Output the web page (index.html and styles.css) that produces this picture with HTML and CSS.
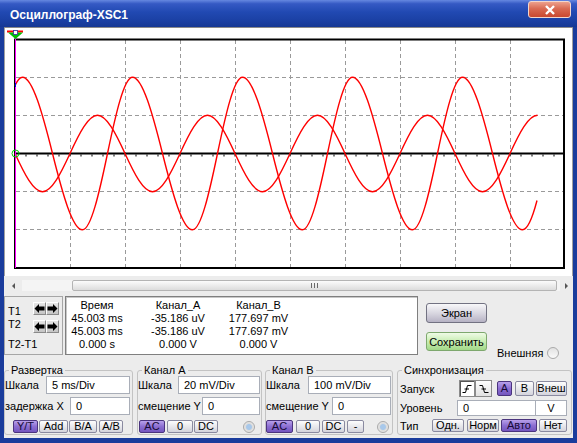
FILE: index.html
```html
<!DOCTYPE html>
<html>
  <head>
    <meta charset="utf-8">
    <title>Осциллограф-XSC1</title>
    <link rel="stylesheet" href="styles.css">
  </head>
  <body>
    <div class="window">
      <div class="titlebar">
        <span class="title">Осциллограф-XSC1</span>
        <button class="close-button">
          <svg width="12" height="10" viewBox="0 0 12 10"><path d="M2 1L10 9M10 1L2 9" stroke="#fff" stroke-width="2.4"/></svg>
        </button>
      </div>

      <div class="client">
        <div class="screen">
          <svg width="567" height="248" viewBox="5 28 567 248">
            <path class="grid" d="M70.5 40V267M125.5 40V267M180.5 40V267M235.5 40V267M290.5 40V267M345.5 40V267M400.5 40V267M455.5 40V267M510.5 40V267M16 77.5H563M16 115.5H563M16 191.5H563M16 229.5H563"/>
            <rect class="frame" x="15" y="39.5" width="549" height="228.5"/>
            <line class="axis" x1="15" y1="153.5" x2="564" y2="153.5"/>
            <line class="ticks" x1="25.5" y1="155.5" x2="564" y2="155.5"/>

            <path class="trace" d="M15 85.5Q18.8 77.2 22.5 77.2
              c10 0 20 36.3 30 76.3c10 40 20 76.3 30 76.3c8.33 0 16.67 -36.3 25 -76.3c8.33 -40 16.67 -76.3 25 -76.3
              c10 0 20 36.3 30 76.3c10 40 20 76.3 30 76.3c8.33 0 16.67 -36.3 25 -76.3c8.33 -40 16.67 -76.3 25 -76.3
              c10 0 20 36.3 30 76.3c10 40 20 76.3 30 76.3c8.33 0 16.67 -36.3 25 -76.3c8.33 -40 16.67 -76.3 25 -76.3
              c10 0 20 36.3 30 76.3c10 40 20 76.3 30 76.3c8.33 0 16.67 -36.3 25 -76.3c8.33 -40 16.67 -76.3 25 -76.3
              c10 0 20 36.3 30 76.3c10 40 20 76.3 30 76.3q6.8 0 14.5 -29.3"/>
            <path class="trace" d="M15 153.5c9.17 20 18.33 38.2 27.5 38.2
              s18.33 -18.2 27.5 -38.2s18.33 -38.2 27.5 -38.2s18.33 18.2 27.5 38.2
              s18.33 38.2 27.5 38.2s18.33 -18.2 27.5 -38.2s18.33 -38.2 27.5 -38.2s18.33 18.2 27.5 38.2
              s18.33 38.2 27.5 38.2s18.33 -18.2 27.5 -38.2s18.33 -38.2 27.5 -38.2s18.33 18.2 27.5 38.2
              s18.33 38.2 27.5 38.2s18.33 -18.2 27.5 -38.2s18.33 -38.2 27.5 -38.2s18.33 18.2 27.5 38.2
              s18.33 38.2 27.5 38.2s18.33 -18.2 27.5 -38.2s18.33 -38.2 27.5 -38.2"/>

            <line class="cursor" x1="15.5" y1="31" x2="15.5" y2="268"/>
            <rect x="15" y="83" width="1" height="4" fill="#0000ff"/>
            <circle class="zero-mark" cx="15.5" cy="153.5" r="3.5"/>
            <rect x="7" y="30.5" width="16" height="2" fill="#ff0000"/>
            <polygon points="8,32.5 23,32.5 15.5,39" fill="#00c000"/>
            <rect x="13.5" y="30.5" width="4" height="4" fill="#fff" stroke="#3030a0" stroke-width="0.8"/>
          </svg>
        </div>

        <div class="hscroll">
          <div class="scroll-arrow"><span class="arrow-left"></span></div>
          <div class="track">
            <div class="thumb"><span class="grip"></span></div>
          </div>
          <div class="scroll-arrow right"><span class="arrow-right"></span></div>
        </div>

        <div class="readout">
          <div class="tbox">
            <div class="tbox-top">
              <div class="tbox-labels">
                <div>T1</div>
                <div>T2</div>
              </div>
              <div class="tbox-buttons">
                <div class="arrow-pair">
                  <button class="step"><svg width="11" height="11" viewBox="0 0 11 11"><path d="M0.5 5.5L5 1V3.5H10.5V7.5H5V10Z"/></svg></button>
                  <button class="step"><svg width="11" height="11" viewBox="0 0 11 11"><path d="M10.5 5.5L6 1V3.5H0.5V7.5H6V10Z"/></svg></button>
                </div>
                <div class="arrow-pair">
                  <button class="step"><svg width="11" height="11" viewBox="0 0 11 11"><path d="M0.5 5.5L5 1V3.5H10.5V7.5H5V10Z"/></svg></button>
                  <button class="step"><svg width="11" height="11" viewBox="0 0 11 11"><path d="M10.5 5.5L6 1V3.5H0.5V7.5H6V10Z"/></svg></button>
                </div>
              </div>
            </div>
            <div class="tdiff">T2-T1</div>
          </div>

          <div class="data">
            <div class="cell">Время</div><div class="cell">Канал_А</div><div class="cell">Канал_В</div>
            <div class="cell">45.003 ms</div><div class="cell">-35.186 uV</div><div class="cell">177.697 mV</div>
            <div class="cell">45.003 ms</div><div class="cell">-35.186 uV</div><div class="cell">177.697 mV</div>
            <div class="cell">0.000 s</div><div class="cell">0.000 V</div><div class="cell">0.000 V</div>
          </div>

          <div class="side">
            <button class="wide-btn">Экран</button>
            <button class="wide-btn save">Сохранить</button>
          </div>

          <div class="ext">
            <span>Внешняя</span>
            <span class="radio"></span>
          </div>
        </div>

        <div class="controls">
          <fieldset class="group g-sweep">
            <legend>Развертка</legend>
            <div class="row"><span>Шкала</span><span class="field w84">5 ms/Div</span></div>
            <div class="row"><span>задержка X</span><span class="field w60">0</span></div>
            <div class="buttons sweep-buttons">
              <button class="btn on w25">Y/T</button>
              <button class="btn w29 ml1">Add</button>
              <button class="btn w28 ml1">B/A</button>
              <button class="btn w24 ml2">A/B</button>
            </div>
          </fieldset>

          <fieldset class="group g-a">
            <legend>Канал А</legend>
            <div class="row"><span>Шкала</span><span class="field w82">20 mV/Div</span></div>
            <div class="row"><span>смещение Y</span><span class="field w58">0</span></div>
            <div class="buttons a-buttons">
              <button class="btn on w26">AC</button>
              <button class="btn w26 ml2">0</button>
              <button class="btn w24 ml1">DC</button>
              <span class="radio dot ml25"></span>
            </div>
          </fieldset>

          <fieldset class="group g-b">
            <legend>Канал В</legend>
            <div class="row"><span>Шкала</span><span class="field w83">100 mV/Div</span></div>
            <div class="row"><span>смещение Y</span><span class="field w59">0</span></div>
            <div class="buttons">
              <button class="btn on w27">AC</button>
              <button class="btn w24 ml3">0</button>
              <button class="btn w23 ml2">DC</button>
              <button class="btn w17 ml2">-</button>
              <span class="radio dot ml13"></span>
            </div>
          </fieldset>

          <fieldset class="group g-sync">
            <legend>Синхронизация</legend>
            <div class="sync-row trigger">
              <span class="lbl-trigger">Запуск</span>
              <button class="edge pressed"><svg width="10" height="10" viewBox="0 0 10 10"><path d="M0.5 8.5H3.5L5.5 1.5H9.5M2.5 5H7" stroke="#000" fill="none"/></svg></button>
              <button class="edge w17"><svg width="10" height="10" viewBox="0 0 10 10"><path d="M0.5 1.5H3.5L5.5 8.5H9.5M2.5 5H7" stroke="#000" fill="none"/></svg></button>
              <button class="btn tall on w15 ml5">A</button>
              <button class="btn tall w19 ml3">B</button>
              <button class="btn tall w31 ml2">Внеш</button>
            </div>
            <div class="sync-row level">
              <span class="lbl-level">Уровень</span>
              <span class="field w79">0</span>
              <span class="field unit">V</span>
            </div>
            <div class="sync-row type">
              <span class="lbl-type">Тип</span>
              <button class="btn w32">Одн.</button>
              <button class="btn w32 ml3">Норм</button>
              <button class="btn on w36 ml2">Авто</button>
              <button class="btn w28 ml2">Нет</button>
            </div>
          </fieldset>
        </div>
      </div>
    </div>
  </body>
</html>
```

FILE: styles.css
```css
body {
  margin: 0;
  font-family: "Liberation Sans", Arial, sans-serif;
  font-size: 11px;
  color: #000;
}
button {
  font: inherit;
  color: inherit;
  padding: 0;
  box-sizing: border-box;
}

.window {
  width: 577px;
  height: 443px;
  display: flex;
  flex-direction: column;
  background: #1a3c9c;
}

/* title bar */
.titlebar {
  height: 27px;
  flex-shrink: 0;
  display: flex;
  justify-content: space-between;
  padding: 0 6px 0 10px;
  background: linear-gradient(#6688e0, #3559c4 14%, #2149b2 45%, #1a3fa2 80%, #163894);
}
.title {
  color: #fff;
  font-weight: bold;
  font-size: 12px;
  margin-top: 8px;
}
.close-button {
  width: 43px;
  height: 17px;
  margin-top: 1px;
  border: 1px solid #f2d6cc;
  border-radius: 3px;
  background: linear-gradient(#eca08c, #d96a52 45%, #c9482f);
  display: flex;
  align-items: center;
  justify-content: center;
}

/* window body */
.client {
  flex: 1;
  margin: 0 4px 5px;
  background: #ececec;
  border-top: 1px solid #8a8a8a;
  display: flex;
  flex-direction: column;
}
.screen {
  height: 248px;
  background: #fff;
  border-left: 1px solid #a0a0a0;
  border-right: 1px solid #a0a0a0;
}
.screen svg {
  display: block;
}
.grid {
  stroke: #9a9a9a;
  stroke-dasharray: 4 3;
  fill: none;
}
.frame {
  fill: none;
  stroke: #000;
  stroke-width: 2;
}
.axis {
  stroke: #000;
  stroke-width: 2;
}
.ticks {
  stroke: #000;
  stroke-width: 2;
  stroke-dasharray: 1 10;
}
.trace {
  fill: none;
  stroke: #ff0000;
  stroke-width: 1.4;
}
.cursor {
  stroke: #ff00ff;
  stroke-width: 1;
}
.zero-mark {
  fill: none;
  stroke: #00d000;
  stroke-width: 1;
}

/* scroll bar */
.hscroll {
  display: flex;
  height: 11px;
  margin-top: 4px;
}
.scroll-arrow {
  width: 18px;
  display: flex;
  align-items: center;
  justify-content: center;
}
.scroll-arrow.right {
  width: 13px;
}
.arrow-left {
  border-right: 3px solid #555;
  border-top: 3px solid transparent;
  border-bottom: 3px solid transparent;
}
.arrow-right {
  border-left: 3px solid #555;
  border-top: 3px solid transparent;
  border-bottom: 3px solid transparent;
}
.track {
  flex: 1;
  display: flex;
  background: #f4f4f4;
}
.thumb {
  flex: 1;
  margin: 0 3px 0 50px;
  border: 1px solid #b4b4b4;
  border-radius: 2px;
  background: linear-gradient(#fcfcfc, #dcdcdc);
  display: flex;
  align-items: center;
  justify-content: center;
}
.grip {
  width: 7px;
  height: 5px;
  background: repeating-linear-gradient(90deg, #6a6a6a 0 1px, transparent 1px 3px);
}

/* readout */
.readout {
  display: flex;
  align-items: flex-start;
  margin-top: 5px;
  height: 59px;
}
.tbox {
  width: 59px;
  height: 59px;
  box-sizing: border-box;
  border: 1px solid #a6a6a6;
  padding-left: 3px;
}
.tbox-top {
  display: flex;
}
.tbox-labels {
  width: 25px;
  padding-top: 8px;
  line-height: 13px;
}
.tbox-buttons {
  padding-top: 5px;
}
.arrow-pair {
  display: flex;
}
.arrow-pair + .arrow-pair {
  margin-top: 5px;
}
.step {
  width: 13px;
  height: 13px;
  border: 1px solid #8a8a8a;
  border-left-color: #fff;
  border-top-color: #fff;
  background: linear-gradient(#e6e6e6, #c4c4c4);
  display: flex;
  align-items: center;
  justify-content: center;
}
.tdiff {
  margin-top: 5px;
  line-height: 13px;
}
.data {
  width: 353px;
  height: 59px;
  margin-left: 2px;
  box-sizing: border-box;
  background: #fff;
  border: 1px solid #7f7f7f;
  box-shadow: inset 1px 1px 0 #c8c8c8;
  padding-top: 2px;
  display: grid;
  grid-template-columns: 62px 100px 61px;
  grid-auto-rows: 13px;
}
.cell {
  display: flex;
  justify-content: center;
  white-space: nowrap;
  line-height: 13px;
}
.side {
  margin-left: 8px;
  padding-top: 7px;
  display: flex;
  flex-direction: column;
  gap: 9px;
}
.wide-btn {
  width: 61px;
  height: 20px;
  border: 1px solid #727282;
  border-radius: 3px;
  background: linear-gradient(#f8f8fa, #d6d4de 55%, #b6b2c4);
}
.wide-btn.save {
  height: 19px;
  border-color: #7ea86e;
  background: linear-gradient(#effbe6, #c8edb2 50%, #a2d888);
}
.ext {
  margin: 50px 0 0 10px;
  height: 13px;
  display: flex;
  align-items: center;
  gap: 4px;
}
.radio {
  width: 12px;
  height: 12px;
  box-sizing: border-box;
  border-radius: 50%;
  border: 1px solid #a9a9a9;
  background: linear-gradient(#e2e2e2, #fafafa);
}
.radio.dot {
  background: radial-gradient(circle, #a8c8ea 0 2.5px, #dcdcdc 3.5px, #f6f6f6);
}

/* bottom groups */
.controls {
  display: flex;
  margin-top: 9px;
}
.group {
  margin: 0;
  padding: 0 0 1px;
  border: 1px solid #c3c3c3;
  border-radius: 3px;
  box-sizing: border-box;
  min-width: 0;
}
.group legend {
  margin-left: 4px;
  padding: 0 2px;
  line-height: 12px;
}
.g-sweep {
  width: 129px;
}
.g-a {
  width: 125px;
  margin-left: 4px;
}
.g-b {
  width: 128px;
  margin-left: 3px;
}
.g-sync {
  width: 175px;
  margin-left: 4px;
  padding-bottom: 2px;
}
.row {
  display: flex;
  align-items: center;
  justify-content: space-between;
  height: 18px;
  padding-right: 1px;
}
.g-sweep .row {
  padding-right: 2px;
}
.row + .row {
  margin-top: 3px;
}
.field {
  height: 18px;
  box-sizing: border-box;
  border: 1px solid #a9aeb8;
  background: #fff;
  padding-left: 5px;
  display: flex;
  align-items: center;
  white-space: nowrap;
}
.buttons {
  display: flex;
  align-items: center;
  height: 13px;
  margin-top: 5px;
}
.sweep-buttons {
  padding-left: 8px;
}
.a-buttons {
  padding-left: 1px;
}
.btn {
  height: 13px;
  line-height: 11px;
  border: 1px solid #8a8aa0;
  border-radius: 2px;
  background: linear-gradient(#fdfdfd, #d4d4dc);
}
.btn.tall {
  height: 15px;
}
.btn.on {
  border-color: #4b347e;
  background: linear-gradient(#b8a0ea, #8c6ed2 50%, #7456be);
  color: #160a36;
}
.sync-row {
  display: flex;
  align-items: center;
  padding-left: 2px;
}
.trigger {
  height: 17px;
  margin-top: 4px;
}
.level {
  height: 16px;
  margin-top: 3px;
}
.level .field {
  height: 16px;
}
.type {
  height: 13px;
  margin-top: 3px;
}
.lbl-trigger {
  width: 59px;
}
.lbl-level {
  width: 57px;
}
.lbl-type {
  width: 32px;
}
.edge {
  width: 16px;
  height: 17px;
  border: 1px solid #8a8a8a;
  background: linear-gradient(#fdfdfd, #e2e2e2);
  display: flex;
  align-items: center;
  justify-content: center;
}
.edge.pressed {
  background: #fff;
  box-shadow: inset 1px 1px 0 #555;
}
.field.unit {
  width: 31px;
  padding: 0;
  justify-content: center;
  border-left: none;
}

.w15 { width: 15px; }
.w17 { width: 17px; }
.w19 { width: 19px; }
.w23 { width: 23px; }
.w24 { width: 24px; }
.w25 { width: 25px; }
.w26 { width: 26px; }
.w27 { width: 27px; }
.w28 { width: 28px; }
.w29 { width: 29px; }
.w31 { width: 31px; }
.w32 { width: 32px; }
.w36 { width: 36px; }
.w58 { width: 58px; }
.w59 { width: 59px; }
.w60 { width: 60px; }
.w79 { width: 79px; }
.w82 { width: 82px; }
.w83 { width: 83px; }
.w84 { width: 84px; }
.ml1 { margin-left: 1px; }
.ml2 { margin-left: 2px; }
.ml3 { margin-left: 3px; }
.ml5 { margin-left: 5px; }
.ml13 { margin-left: 13px; }
.ml25 { margin-left: 25px; }
```
